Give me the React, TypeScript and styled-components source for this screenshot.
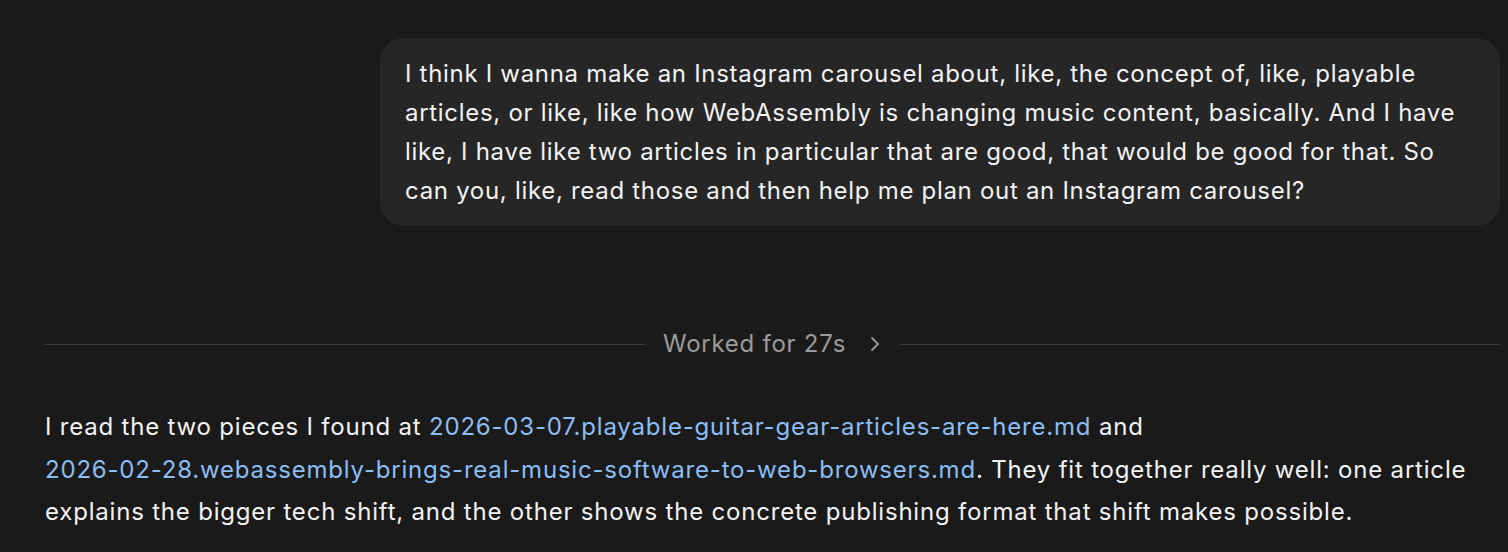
import React from "react";
import styled, { createGlobalStyle } from "styled-components";

const Global = createGlobalStyle`
  html, body { margin: 0; padding: 0; background: #1a1a1a; }
  body { font-family: Inter, "Noto Sans", "Liberation Sans", sans-serif; -webkit-font-smoothing: antialiased; }
`;

const Page = styled.div`
  width: 1508px;
  height: 552px;
  overflow: hidden;
  background: #1a1a1a;
  box-sizing: border-box;
  padding: 38px 8px 0 45px;
  display: flex;
  flex-direction: column;
`;

const UserRow = styled.div`
  display: flex;
  justify-content: flex-end;
`;

const Bubble = styled.div`
  width: 1120px;
  box-sizing: border-box;
  background: #262626;
  border-radius: 24px;
  padding: 16px 25px;
  color: #f2f2f2;
  font-size: 24px;
  letter-spacing: 0.7px;
  line-height: 39px;
`;

const Divider = styled.div`
  margin-top: 103px;
  display: flex;
  align-items: center;
  gap: 18px;
  color: #9a9a9a;
  font-size: 24px;
  letter-spacing: 0.75px;
  line-height: 30px;
`;

const Rule = styled.div`
  flex: 1;
  height: 1px;
  background: #3d3d3d;
`;

const Label = styled.div`
  display: flex;
  align-items: center;
  gap: 22px;
`;

const Answer = styled.p`
  margin: 47px 0 0;
  color: #f2f2f2;
  font-size: 24px;
  letter-spacing: 0.8px;
  line-height: 42.5px;
`;

const Link = styled.span`
  color: #8abef4;
  white-space: nowrap;
`;

export default function App() {
  return (
    <>
      <Global />
      <Page>
        <UserRow>
          <Bubble>
            I think I wanna make an Instagram carousel about, like, the concept of, like, playable articles, or like, like how WebAssembly is changing music content, basically. And I have like, I have like two articles in particular that are good, that would be good for that. So can you, like, read those and then help me plan out an Instagram carousel?
          </Bubble>
        </UserRow>
        <Divider>
          <Rule />
          <Label>
            <span>Worked for 27s</span>
            <svg width="14" height="16" viewBox="0 0 14 16" fill="none">
              <path d="M4 2 L10 8 L4 14" stroke="#9a9a9a" strokeWidth="1.8" strokeLinecap="round" strokeLinejoin="round" />
            </svg>
          </Label>
          <Rule />
        </Divider>
        <Answer>
          I read the two pieces I found at <Link>2026-03-07.playable-guitar-gear-articles-are-here.md</Link> and{" "}
          <Link>2026-02-28.webassembly-brings-real-music-software-to-web-browsers.md</Link>. They fit together really well: one article explains the bigger tech shift, and the other shows the concrete publishing format that shift makes possible.
        </Answer>
      </Page>
    </>
  );
}
